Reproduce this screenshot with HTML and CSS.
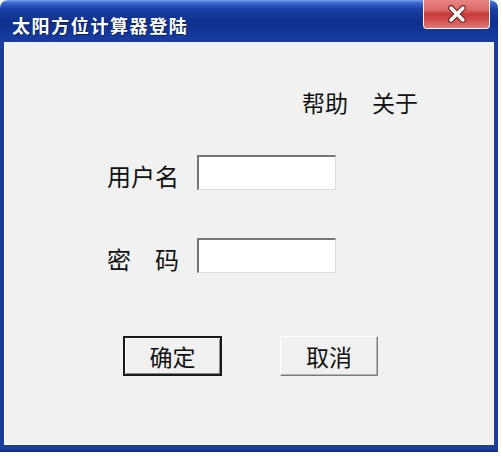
FILE: index.html
```html
<!DOCTYPE html>
<html lang="zh-CN">
<head>
    <meta charset="UTF-8">
    <title>太阳方位计算器登陆</title>
    <link rel="stylesheet" href="styles.css">
</head>
<body>

<div class="window">
    <!-- Title bar -->
    <div class="titlebar">
        <span class="title">太阳方位计算器登陆</span>
        <button class="close" title="关闭">
            <svg width="22" height="18" viewBox="0 0 22 18">
                <path d="M5 3 L17 15 M17 3 L5 15" stroke="#7a2a2a" stroke-width="6" stroke-linecap="round"/>
                <path d="M5 3 L17 15 M17 3 L5 15" stroke="#ffffff" stroke-width="3.4" stroke-linecap="round"/>
            </svg>
        </button>
    </div>

    <div class="client">
        <div class="menu">
            <span>帮助</span>
            <span>关于</span>
        </div>

        <div class="form">
            <label class="label">用户名</label>
            <input class="field" type="text">
            <label class="label label-spread"><span>密</span><span>码</span></label>
            <input class="field" type="password">
        </div>

        <div class="actions">
            <button class="btn btn-default">确定</button>
            <button class="btn">取消</button>
        </div>
    </div>
</div>

</body>
</html>
```

FILE: styles.css
```css
body {
    margin: 0;
    padding: 0;
    background-color: #ffffff;
    font-family: "Noto Sans CJK SC", "Liberation Sans", sans-serif;
    color: #111111;
}

.window {
    width: 498px;
    height: 452px;
    box-sizing: border-box;
    padding: 0 4px 7px 4px;
    border-radius: 8px 8px 0 0;
    background: linear-gradient(to bottom,
        #7ea3ea 0px,
        #3a66d2 3px,
        #1a40a6 9px,
        #0f2f8c 22px,
        #163ba0 38px,
        #1b3d9e 42px,
        #1b3d9e 100%);
    box-shadow: inset 0 -2px 0 #14307e;
    display: flex;
    flex-direction: column;
}

.titlebar {
    height: 42px;
    flex-shrink: 0;
    display: flex;
    justify-content: space-between;
    align-items: flex-start;
    padding-left: 8px;
}

.title {
    margin-top: 16px;
    font-size: 18px;
    line-height: 18px;
    font-weight: bold;
    letter-spacing: 1.6px;
    color: #ffffff;
    text-shadow: 1px 1px 0 #0a1f63;
}

.close {
    width: 67px;
    height: 29px;
    margin-right: 4px;
    padding: 0;
    border: 1px solid #f4f4f4;
    border-top: none;
    border-radius: 0 0 4px 4px;
    background: linear-gradient(to bottom,
        #e78484 0%,
        #dc6a6a 35%,
        #c63a38 50%,
        #cf4e4c 70%,
        #e07878 100%);
    display: flex;
    align-items: center;
    justify-content: center;
    cursor: pointer;
}

.client {
    flex: 1;
    background-color: #f1f1f1;
    box-shadow: inset 1px 0 0 #fbfbfb, inset -1px -1px 0 #fbfbfb;
}

.menu {
    display: flex;
    gap: 24px;
    margin-top: 49px;
    margin-left: 298px;
    font-size: 23px;
    line-height: 23px;
}

.form {
    display: grid;
    grid-template-columns: 72px 139px;
    grid-template-rows: 35px 35px;
    column-gap: 18px;
    row-gap: 48px;
    margin-top: 41px;
    margin-left: 103px;
}

.label {
    align-self: center;
    margin-top: 6px;
    font-size: 24px;
    line-height: 24px;
}

.label-spread {
    display: flex;
    justify-content: space-between;
}

.field {
    width: 139px;
    height: 35px;
    box-sizing: border-box;
    margin: 0;
    background-color: #ffffff;
    border-top: 2px solid #767676;
    border-left: 2px solid #767676;
    border-right: 1px solid #dedede;
    border-bottom: 1px solid #dedede;
    outline: none;
}

.actions {
    display: flex;
    gap: 58px;
    margin-top: 63px;
    margin-left: 119px;
}

.btn {
    width: 98px;
    height: 40px;
    box-sizing: border-box;
    padding: 0;
    font-family: inherit;
    font-size: 23px;
    line-height: 23px;
    color: #111111;
    background-color: #f0f0f0;
    border: 1px solid;
    border-color: #ffffff #7c7c7c #7c7c7c #ffffff;
    box-shadow: inset -1px -1px 0 #b4b4b4;
    cursor: pointer;
}

.btn-default {
    width: 99px;
    border: 2px solid #1a1a1a;
    box-shadow: inset 1px 1px 0 #ffffff, inset -1px -1px 0 #8a8a8a;
}
```
